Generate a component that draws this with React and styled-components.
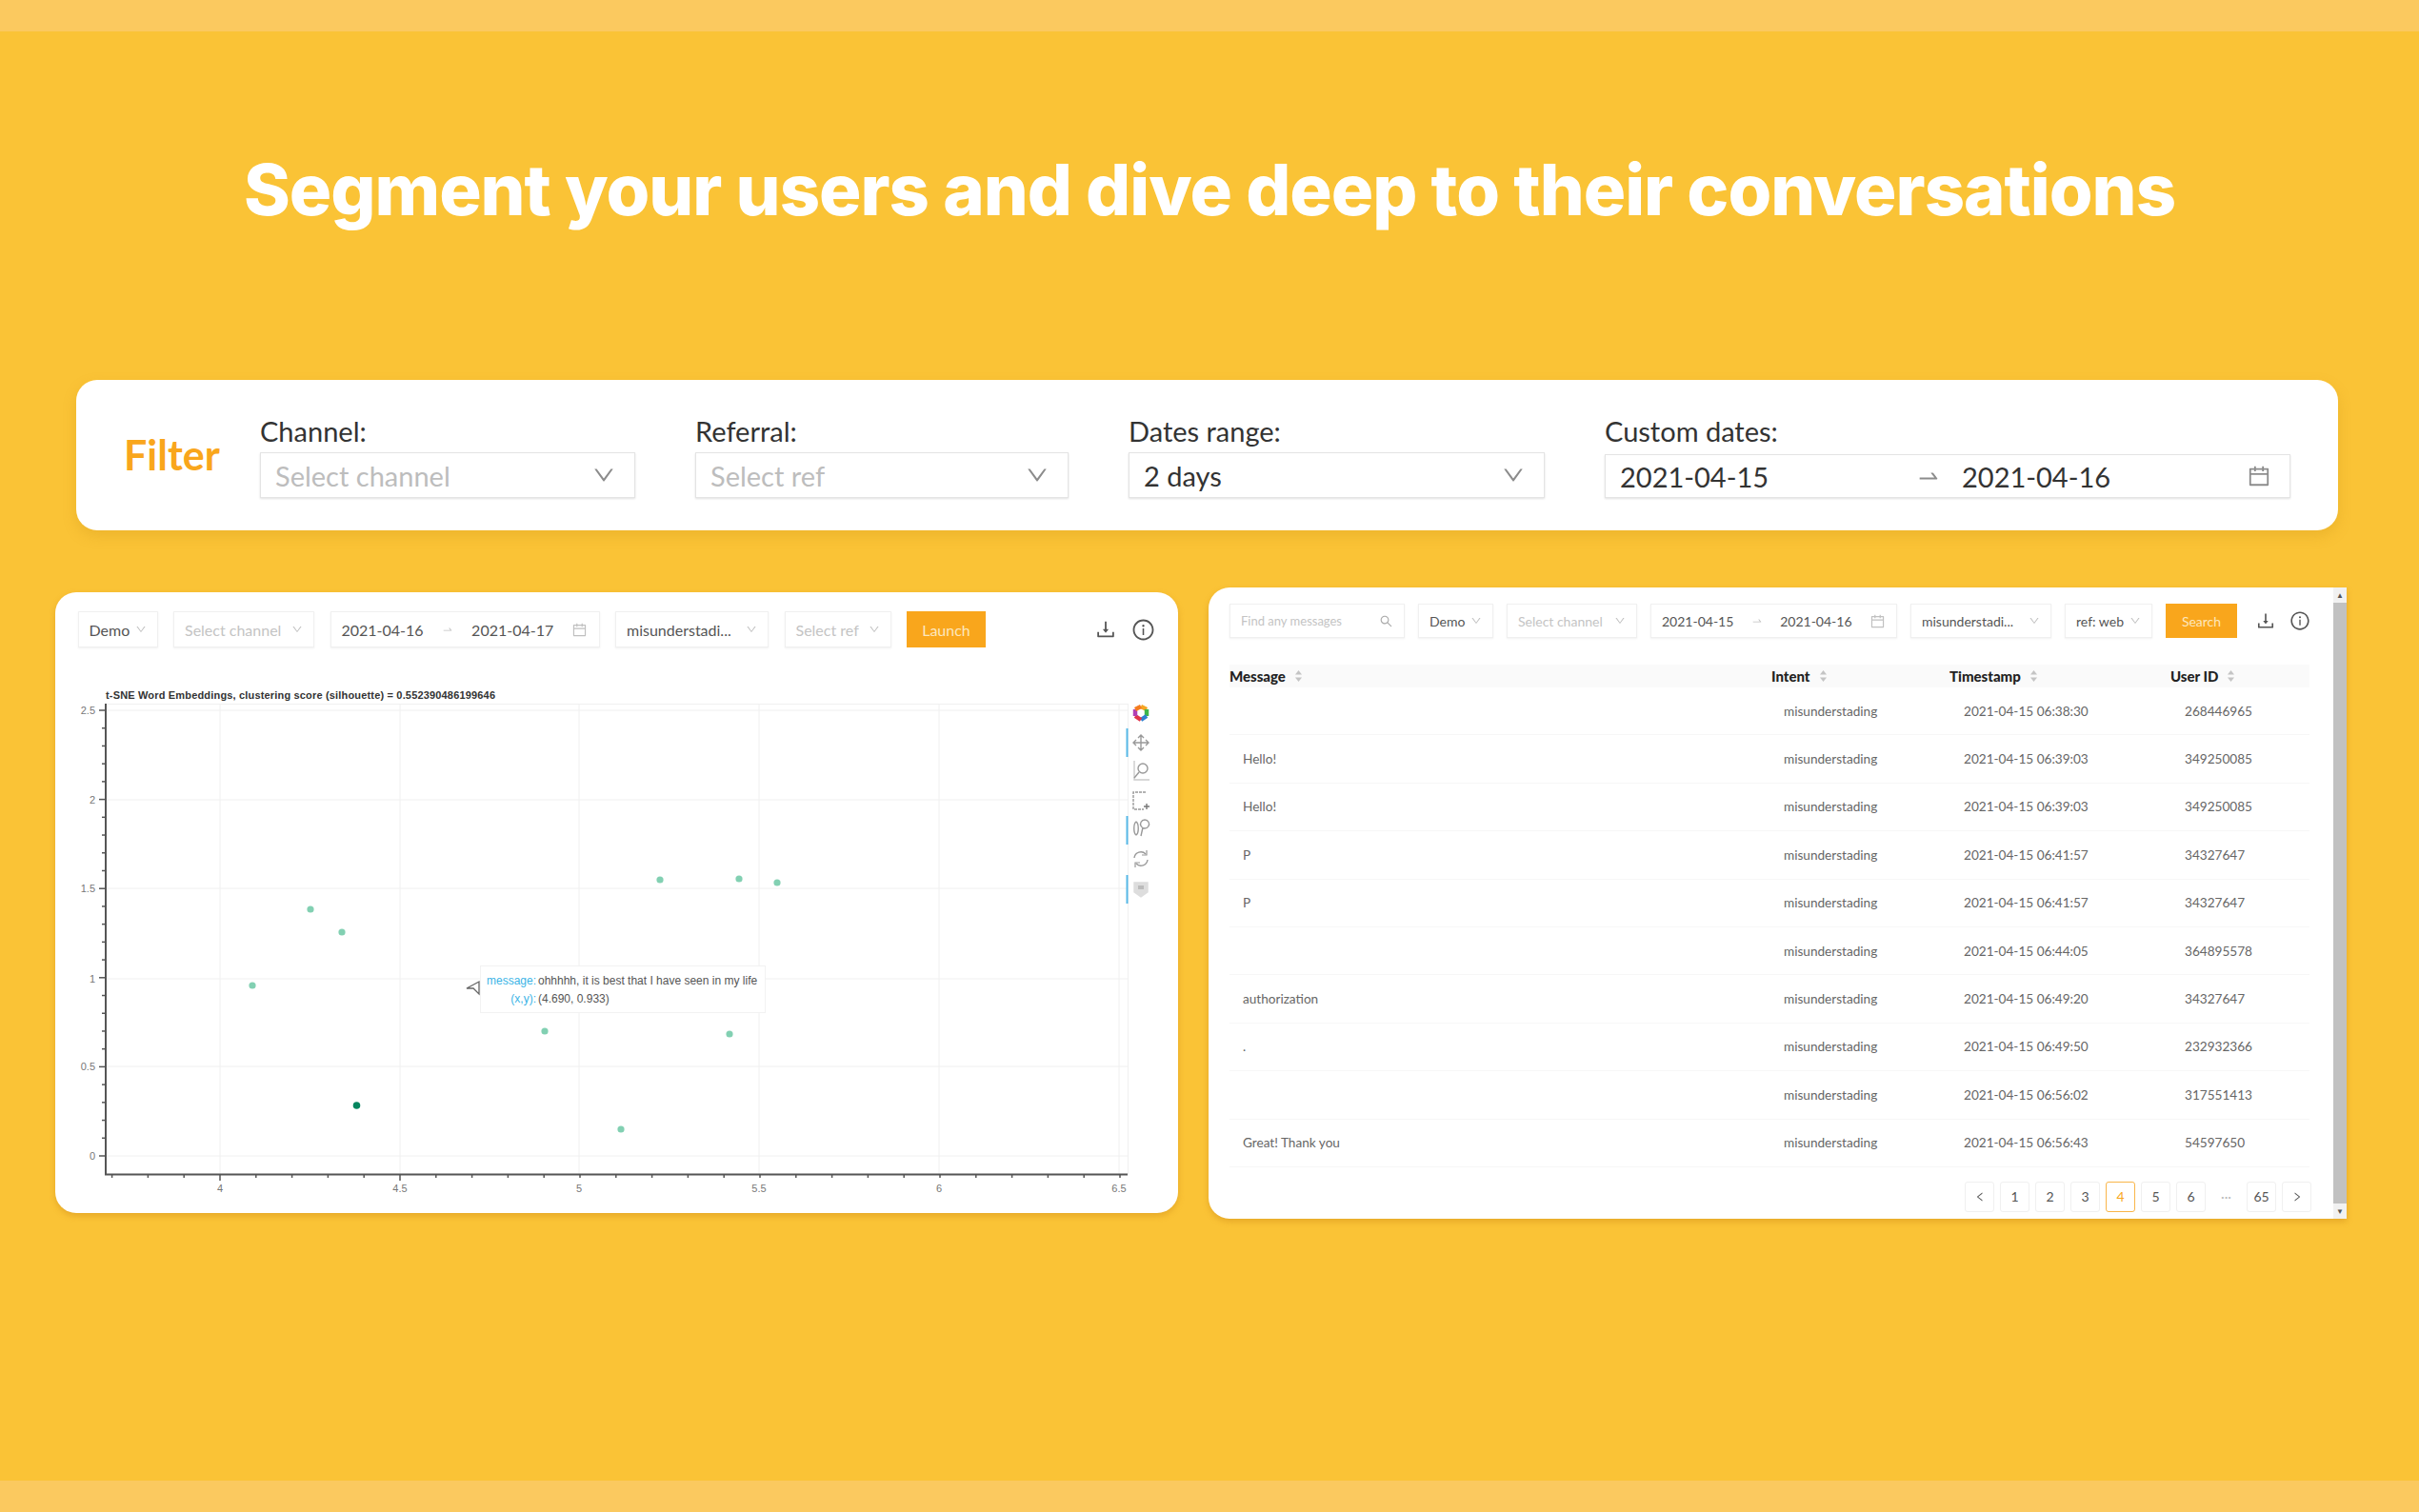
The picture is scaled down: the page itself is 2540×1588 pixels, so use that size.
import React from 'react';
import styled, { createGlobalStyle } from 'styled-components';
import {
  AiOutlineCalendar,
  AiOutlineDown,
  AiOutlineDownload,
  AiOutlineInfoCircle,
  AiOutlineLeft,
  AiOutlineRight,
  AiOutlineSearch,
  AiOutlineSwapRight,
} from 'react-icons/ai';

const GlobalStyle = createGlobalStyle`
  html, body {
    margin: 0;
    padding: 0;
    background: #fac336;
  }
  * {
    box-sizing: border-box;
  }
`;

const Page = styled.div`
  width: 2540px;
  height: 1588px;
  overflow: hidden;
  display: flex;
  flex-direction: column;
  background: #fac336;
  font-family: Lato, 'Open Sans', sans-serif;
`;

const Band = styled.div`
  height: 33px;
  flex: none;
  background: #fbc95f;
  margin-top: ${({ $bottom }) => ($bottom ? 'auto' : '0')};
`;

const Hero = styled.header`
  height: 366px;
  flex: none;
  padding-top: 121px;
`;

const Title = styled.h1`
  margin: 0;
  text-align: center;
  color: #fff;
  font-family: Inter, 'Open Sans', sans-serif;
  font-size: 74px;
  line-height: 90px;
  font-weight: 800;
  letter-spacing: -1px;
`;

const FilterCard = styled.section`
  width: 2375px;
  height: 158px;
  flex: none;
  margin-left: 80px;
  padding: 38px 0 0 50px;
  display: flex;
  align-items: flex-start;
  background: #fff;
  border-radius: 22px;
  box-shadow: 0 6px 14px rgba(200, 140, 20, 0.25);
`;

const FilterTitle = styled.h2`
  width: 143px;
  flex: none;
  margin: 17px 0 0;
  color: #f9a61c;
  font-size: 43px;
  line-height: 48px;
  font-weight: 700;
`;

const Fields = styled.div`
  display: flex;
  gap: 63px;
`;

const Field = styled.div`
  width: ${({ $w }) => $w}px;
`;

const FieldLabel = styled.div`
  height: 38px;
  color: #333;
  font-size: 29px;
  line-height: 32px;
`;

const BigSelect = styled.div`
  height: 48px;
  padding: 0 19px 0 15px;
  display: flex;
  align-items: center;
  justify-content: space-between;
  border: 1px solid #e4e4e4;
  box-shadow: 0 1px 2px rgba(0, 0, 0, 0.12);
  color: ${({ $muted }) => ($muted ? '#bdbdbd' : '#333')};
  font-size: 29px;
  svg {
    color: #8c8c8c;
    font-size: 26px;
  }
`;

const BigRange = styled(BigSelect)`
  height: 46px;
  margin-top: 2px;
  justify-content: flex-start;
  span:first-child {
    width: 311px;
  }
  span:nth-child(3) {
    margin-left: 22px;
  }
`;

const PushRight = styled.span`
  margin-left: auto;
  display: flex;
`;

const Panels = styled.div`
  flex: none;
  padding: 60px 0 0 58px;
  display: flex;
  align-items: flex-start;
  gap: 32px;
`;

const ChartPanel = styled.section`
  width: 1179px;
  height: 652px;
  margin-top: 5px;
  padding-top: 20px;
  background: #fff;
  border-radius: 22px;
  box-shadow: 0 3px 6px rgba(200, 130, 20, 0.4);
`;

const TablePanel = styled.section`
  width: 1195px;
  height: 663px;
  display: flex;
  background: #fff;
  border-radius: 22px 0 0 22px;
  box-shadow: 0 3px 6px rgba(200, 130, 20, 0.4);
`;

const TableBody = styled.div`
  flex: 1;
  padding: 17px 0 0 22px;
`;

const Toolbar = styled.div`
  display: flex;
  align-items: center;
  gap: ${({ $gap }) => $gap}px;
  height: ${({ $h }) => $h}px;
  margin-left: ${({ $left }) => $left || 0}px;
`;

const Control = styled.div`
  width: ${({ $w }) => $w}px;
  height: 100%;
  flex: none;
  padding: 0 11px;
  display: flex;
  align-items: center;
  justify-content: space-between;
  border: 1px solid #f0f0f0;
  box-shadow: 0 1px 2px rgba(0, 0, 0, 0.06);
  color: ${({ $muted }) => ($muted ? '#c4c4c4' : '#555')};
  font-size: ${({ $size }) => $size}px;
  white-space: nowrap;
  svg {
    flex: none;
    color: #c0c0c0;
    font-size: 12px;
  }
`;

const CalendarIcon = styled(AiOutlineCalendar)`
  && {
    font-size: 17px;
  }
`;

const SearchIcon = styled(AiOutlineSearch)`
  && {
    color: #aaa;
    font-size: 15px;
  }
`;

const ActionButton = styled.div`
  width: ${({ $w }) => $w}px;
  height: 100%;
  flex: none;
  display: flex;
  align-items: center;
  justify-content: center;
  background: #f9a61c;
  color: #fde6bd;
  font-size: ${({ $size }) => $size}px;
`;

const ToolIcon = styled.span`
  display: flex;
  flex: none;
  margin-left: ${({ $left }) => $left}px;
  color: #555;
  font-size: ${({ $size }) => $size}px;
`;

const ChartWrap = styled.div`
  position: relative;
  margin-top: 11px;
  svg {
    display: block;
  }
  text {
    font-family: 'Liberation Sans', Arial, sans-serif;
  }
`;

const Tooltip = styled.div`
  position: absolute;
  left: 446px;
  top: 323px;
  width: 300px;
  height: 50px;
  padding: 5px 0 0 6px;
  display: grid;
  grid-template-columns: 52px 1fr;
  column-gap: 2px;
  grid-auto-rows: 19px;
  align-items: center;
  background: #fff;
  border: 1px solid #f2f2f2;
  color: #555;
  font-family: 'Liberation Sans', Arial, sans-serif;
  font-size: 12px;
  white-space: nowrap;
`;

const TipKey = styled.span`
  color: #3cb4e6;
  text-align: right;
`;

const HeaderRow = styled.div`
  height: 24px;
  margin-top: 28px;
  width: 1134px;
  display: grid;
  grid-template-columns: 569px 187px 232px 146px;
  align-items: center;
  background: #fafafa;
  color: #222;
  font-size: 15px;
  font-weight: 900;
`;

const HeaderCell = styled.div`
  display: flex;
  align-items: center;
  gap: 10px;
`;

const SortMark = styled.svg`
  width: 7px;
  height: 12px;
  fill: #c4c4c4;
`;

const Row = styled.div`
  height: 50.4px;
  width: 1134px;
  display: grid;
  grid-template-columns: 569px 187px 232px 146px;
  align-items: center;
  border-bottom: 1px solid #f7f7f7;
  color: #666;
  font-size: 13.6px;
`;

const Cell = styled.div`
  padding-left: ${({ $pad }) => $pad}px;
`;

const Pager = styled.nav`
  width: 1136px;
  margin-top: 15px;
  display: flex;
  justify-content: flex-end;
  gap: 6px;
`;

const PageItem = styled.div`
  width: 31px;
  height: 32px;
  display: flex;
  align-items: center;
  justify-content: center;
  border: 1px solid ${({ $active, $plain }) => ($plain ? 'transparent' : $active ? '#f9b64a' : '#f0f0f0')};
  border-radius: 3px;
  color: ${({ $active, $plain }) => ($active ? '#f9a61c' : $plain ? '#bbb' : '#555')};
  font-size: 14px;
`;

const Scrollbar = styled.div`
  width: 14px;
  flex: none;
  display: flex;
  flex-direction: column;
  background: #f1f1f1;
`;

const ScrollArrow = styled.div`
  height: 16px;
  flex: none;
  display: flex;
  align-items: center;
  justify-content: center;
  color: #555;
  font-size: 8px;
`;

const ScrollThumb = styled.div`
  flex: 1;
  background: #c1c1c1;
`;

const rows = [
  ['', '2021-04-15 06:38:30', '268446965'],
  ['Hello!', '2021-04-15 06:39:03', '349250085'],
  ['Hello!', '2021-04-15 06:39:03', '349250085'],
  ['P', '2021-04-15 06:41:57', '34327647'],
  ['P', '2021-04-15 06:41:57', '34327647'],
  ['', '2021-04-15 06:44:05', '364895578'],
  ['authorization', '2021-04-15 06:49:20', '34327647'],
  ['.', '2021-04-15 06:49:50', '232932366'],
  ['', '2021-04-15 06:56:02', '317551413'],
  ['Great! Thank you', '2021-04-15 06:56:43', '54597650'],
];

const dots = [
  [326, 954],
  [359, 978],
  [265, 1034],
  [572, 1082],
  [652, 1185],
  [693, 923],
  [776, 922],
  [816, 926],
  [766, 1085],
];

const xLabels = ['4', '4.5', '5', '5.5', '6', '6.5'];
const yLabels = ['2.5', '2', '1.5', '1', '0.5', '0'];
const xGrid = [231, 420, 608, 797, 986, 1175];
const yGrid = [745, 839, 932, 1027, 1119, 1213];
const xTicks = Array.from({ length: 29 }, (_, i) => 231 + (i - 3) * 37.8);
const yTicks = Array.from({ length: 26 }, (_, i) => 745 + i * 18.72);

const SortIcon = () => (
  <SortMark viewBox="0 0 7 12">
    <path d="M3.5 0 7 4.5H0z" />
    <path d="M3.5 12 7 7.5H0z" />
  </SortMark>
);

const ChartTools = () => (
  <g fill="none" stroke="#999" strokeWidth="1.4">
    {/* bokeh logo */}
    <g strokeWidth="4.5">
      <path d="M1198 741l6 3" stroke="#f5a623" />
      <path d="M1204 744v7" stroke="#3fb54a" />
      <path d="M1204 751l-6 4" stroke="#2f80d0" />
      <path d="M1198 755l-6-4" stroke="#e0344b" />
      <path d="M1192 751v-7" stroke="#b13fb5" />
      <path d="M1192 744l6-3" stroke="#f57c20" />
    </g>
    <path d="M1183.5 764V794M1183.5 856V886M1183.5 918V948" stroke="#58b9e8" strokeWidth="2" />
    {/* pan */}
    <path d="M1198 771V787M1190 779H1206M1195 774l3-3 3 3M1195 784l3 3 3-3M1193 776l-3 3 3 3M1203 776l3 3-3 3" />
    {/* wheel zoom */}
    <circle cx="1200" cy="806" r="5" />
    <path d="M1191 798V818H1207" stroke="#ccc" />
    <path d="M1196 810l-5 6" />
    {/* box zoom */}
    <path d="M1203 831H1190V849H1201" strokeDasharray="3 1" />
    <path d="M1204 843V849M1201 846H1207" stroke="#777" />
    {/* lasso */}
    <path d="M1193 862c-3 2-3 12 0 14 3-2 3-12 0-14zM1202 860a4.5 4.5 0 1 0 .1 0zM1200 868l-2 9" />
    {/* reset */}
    <path d="M1191 900a7 7 0 0 1 12-4M1205 902a7 7 0 0 1-12 4" />
    <path d="M1204 892v5h-5M1192 910v-5h5" strokeWidth="1.2" />
    {/* save */}
    <path d="M1191 926h14v10l-7 5-7-5z" fill="#ddd" stroke="#ddd" />
    <rect x="1195" y="929" width="6" height="4" fill="#bbb" stroke="none" />
  </g>
);

const Chart = () => (
  <svg width="1179" height="584" viewBox="58 690 1179 584">
    <text x="111" y="733" fontSize="11" fontWeight="700" fill="#333" textLength="409">
      t-SNE Word Embeddings, clustering score (silhouette) = 0.552390486199646
    </text>
    <g stroke="#f0f0f0" strokeWidth="1">
      <path d="M111 738.5H1184M1184.5 738V1232" />
      {xGrid.map((x) => (
        <line key={x} x1={x} x2={x} y1="738" y2="1232" />
      ))}
      {yGrid.map((y) => (
        <line key={y} x1="111" x2="1184" y1={y} y2={y} />
      ))}
    </g>
    <g stroke="#555" strokeWidth="1.5">
      <path d="M111 738V1232.5H1184" strokeWidth="2" fill="none" />
      {xTicks.map((x) => (
        <line key={x} x1={x} x2={x} y1="1232" y2={xGrid.some((g) => Math.abs(g - x) < 1) ? 1239 : 1236} />
      ))}
      {yTicks.map((y) => (
        <line key={y} y1={y} y2={y} x1="111" x2={yGrid.some((g) => Math.abs(g - y) < 1.5) ? 104 : 107} />
      ))}
    </g>
    <g fontSize="11" fill="#777">
      {xLabels.map((label, i) => (
        <text key={label} x={xGrid[i]} y="1251" textAnchor="middle">
          {label}
        </text>
      ))}
      {yLabels.map((label, i) => (
        <text key={label} x="100" y={yGrid[i] + 4} textAnchor="end">
          {label}
        </text>
      ))}
    </g>
    <g fill="#82d0b2">
      {dots.map(([cx, cy]) => (
        <circle key={cx} cx={cx} cy={cy} r="3.6" />
      ))}
    </g>
    <circle cx="374.5" cy="1160" r="3.8" fill="#06865f" />
    <path d="M490 1037l13-7v13l-6-6z" fill="none" stroke="#666" strokeWidth="1.3" />
    <ChartTools />
  </svg>
);

const App = () => (
  <Page>
    <GlobalStyle />
    <Band />
    <Hero>
      <Title>Segment your users and dive deep to their conversations</Title>
    </Hero>

    <FilterCard>
      <FilterTitle>Filter</FilterTitle>
      <Fields>
        <Field $w={394}>
          <FieldLabel>Channel:</FieldLabel>
          <BigSelect $muted>
            Select channel
            <AiOutlineDown />
          </BigSelect>
        </Field>
        <Field $w={392}>
          <FieldLabel>Referral:</FieldLabel>
          <BigSelect $muted>
            Select ref
            <AiOutlineDown />
          </BigSelect>
        </Field>
        <Field $w={437}>
          <FieldLabel>Dates range:</FieldLabel>
          <BigSelect>
            2 days
            <AiOutlineDown />
          </BigSelect>
        </Field>
        <Field $w={720}>
          <FieldLabel>Custom dates:</FieldLabel>
          <BigRange>
            <span>2021-04-15</span>
            <AiOutlineSwapRight />
            <span>2021-04-16</span>
            <PushRight>
              <AiOutlineCalendar />
            </PushRight>
          </BigRange>
        </Field>
      </Fields>
    </FilterCard>

    <Panels>
      <ChartPanel>
        <Toolbar $h={38} $gap={16.5} $left={23.5}>
          <Control $w={84} $size={16}>
            Demo
            <AiOutlineDown />
          </Control>
          <Control $w={148} $size={16} $muted>
            Select channel
            <AiOutlineDown />
          </Control>
          <Control $w={283} $size={16}>
            <span>2021-04-16</span>
            <AiOutlineSwapRight />
            <span>2021-04-17</span>
            <CalendarIcon />
          </Control>
          <Control $w={161} $size={16}>
            misunderstadi...
            <AiOutlineDown />
          </Control>
          <Control $w={112} $size={16} $muted>
            Select ref
            <AiOutlineDown />
          </Control>
          <ActionButton $w={83} $size={16}>
            Launch
          </ActionButton>
          <ToolIcon $left={97} $size={24}>
            <AiOutlineDownload />
          </ToolIcon>
          <ToolIcon $left={-1} $size={25}>
            <AiOutlineInfoCircle />
          </ToolIcon>
        </Toolbar>
        <ChartWrap>
          <Chart />
          <Tooltip>
            <TipKey>message:</TipKey>
            <span>ohhhhh, it is best that I have seen in my life</span>
            <TipKey>(x,y):</TipKey>
            <span>(4.690, 0.933)</span>
          </Tooltip>
        </ChartWrap>
      </ChartPanel>

      <TablePanel>
        <TableBody>
          <Toolbar $h={36} $gap={14}>
            <Control $w={184} $size={13}>
              <span style={{ color: '#c4c4c4' }}>Find any messages</span>
              <SearchIcon />
            </Control>
            <Control $w={79} $size={14}>
              Demo
              <AiOutlineDown />
            </Control>
            <Control $w={137} $size={14} $muted>
              Select channel
              <AiOutlineDown />
            </Control>
            <Control $w={259} $size={14}>
              <span>2021-04-15</span>
              <AiOutlineSwapRight />
              <span>2021-04-16</span>
              <CalendarIcon />
            </Control>
            <Control $w={148} $size={14}>
              misunderstadi...
              <AiOutlineDown />
            </Control>
            <Control $w={92} $size={14}>
              ref: web
              <AiOutlineDown />
            </Control>
            <ActionButton $w={75} $size={14}>
              Search
            </ActionButton>
            <ToolIcon $left={5} $size={22}>
              <AiOutlineDownload />
            </ToolIcon>
            <ToolIcon $left={0} $size={22}>
              <AiOutlineInfoCircle />
            </ToolIcon>
          </Toolbar>

          <HeaderRow>
            <HeaderCell>
              Message
              <SortIcon />
            </HeaderCell>
            <HeaderCell>
              Intent
              <SortIcon />
            </HeaderCell>
            <HeaderCell>
              Timestamp
              <SortIcon />
            </HeaderCell>
            <HeaderCell>
              User ID
              <SortIcon />
            </HeaderCell>
          </HeaderRow>

          {rows.map(([message, timestamp, userId], i) => (
            <Row key={i}>
              <Cell $pad={14}>{message}</Cell>
              <Cell $pad={13}>misunderstading</Cell>
              <Cell $pad={15}>{timestamp}</Cell>
              <Cell $pad={15}>{userId}</Cell>
            </Row>
          ))}

          <Pager>
            <PageItem>
              <AiOutlineLeft size={12} />
            </PageItem>
            {[1, 2, 3, 4, 5, 6].map((n) => (
              <PageItem key={n} $active={n === 4}>
                {n}
              </PageItem>
            ))}
            <PageItem $plain>···</PageItem>
            <PageItem>65</PageItem>
            <PageItem>
              <AiOutlineRight size={12} />
            </PageItem>
          </Pager>
        </TableBody>

        <Scrollbar>
          <ScrollArrow>▲</ScrollArrow>
          <ScrollThumb />
          <ScrollArrow>▼</ScrollArrow>
        </Scrollbar>
      </TablePanel>
    </Panels>
    <Band $bottom />
  </Page>
);

export default App;
